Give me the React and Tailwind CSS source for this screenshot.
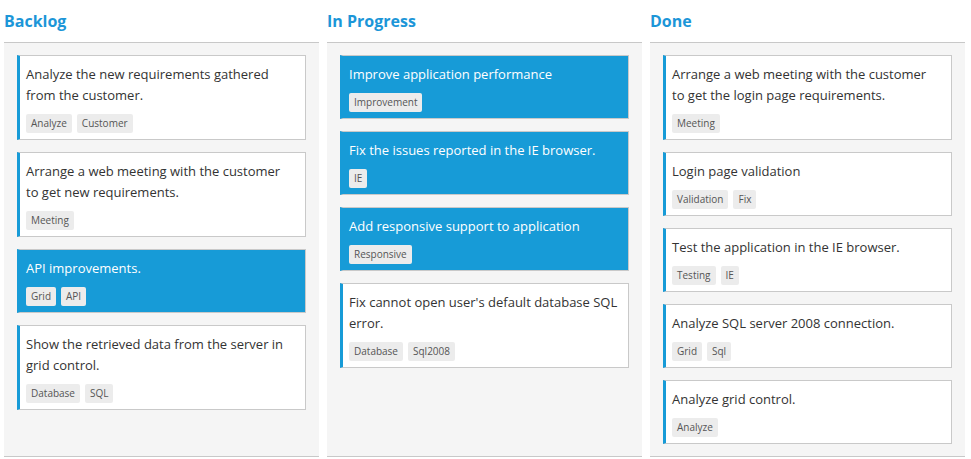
import React from 'react';

const columns = [
  {
    title: 'Backlog',
    cards: [
      { text: 'Analyze the new requirements gathered from the customer.', tags: ['Analyze', 'Customer'] },
      { text: 'Arrange a web meeting with the customer to get new requirements.', tags: ['Meeting'] },
      { text: 'API improvements.', tags: ['Grid', 'API'], active: true },
      { text: 'Show the retrieved data from the server in grid control.', tags: ['Database', 'SQL'] },
    ],
  },
  {
    title: 'In Progress',
    cards: [
      { text: 'Improve application performance', tags: ['Improvement'], active: true },
      { text: 'Fix the issues reported in the IE browser.', tags: ['IE'], active: true },
      { text: 'Add responsive support to application', tags: ['Responsive'], active: true },
      { text: "Fix cannot open user's default database SQL error.", tags: ['Database', 'Sql2008'] },
    ],
  },
  {
    title: 'Done',
    cards: [
      { text: 'Arrange a web meeting with the customer to get the login page requirements.', tags: ['Meeting'] },
      { text: 'Login page validation', tags: ['Validation', 'Fix'] },
      { text: 'Test the application in the IE browser.', tags: ['Testing', 'IE'] },
      { text: 'Analyze SQL server 2008 connection.', tags: ['Grid', 'Sql'] },
      { text: 'Analyze grid control.', tags: ['Analyze'] },
    ],
  },
];

const Card = ({ card }) => (
  <div
    className={`border border-[#c9c9c9] border-l-[3px] border-l-[#179bd7] pl-[6px] pr-[10px] pt-2 pb-[6px] ${
      card.active ? 'bg-[#179bd7] text-white' : 'bg-white text-[#333]'
    }`}
  >
    <div className="text-[13px] leading-[21px]">{card.text}</div>
    <div className="flex gap-[5px] mt-2">
      {card.tags.map((t) => (
        <span
          key={t}
          className="h-[19px] px-[5px] rounded-[2px] bg-[#ececec] text-[#555] text-[10px] leading-[19px]"
        >
          {t}
        </span>
      ))}
    </div>
  </div>
);

export default function App() {
  return (
    <div
      className="flex gap-2 pl-1 pr-1.5 h-[459px] bg-white"
      style={{ fontFamily: '"Open Sans", "Noto Sans", sans-serif' }}
    >
      {columns.map((col) => (
        <div key={col.title} className="flex flex-col w-[315px] pb-[2px]">
          <div className="h-[43px] border-b border-[#c8c8c8] pt-[9px]">
            <h2 className="text-[16px] leading-6 font-bold text-[#1c96d8]">{col.title}</h2>
          </div>
          <div className="flex-1 bg-[#f5f5f5] border-b border-[#c8c8c8] px-[13px] pt-3 flex flex-col gap-3">
            {col.cards.map((c, i) => (
              <Card key={i} card={c} />
            ))}
          </div>
        </div>
      ))}
    </div>
  );
}
